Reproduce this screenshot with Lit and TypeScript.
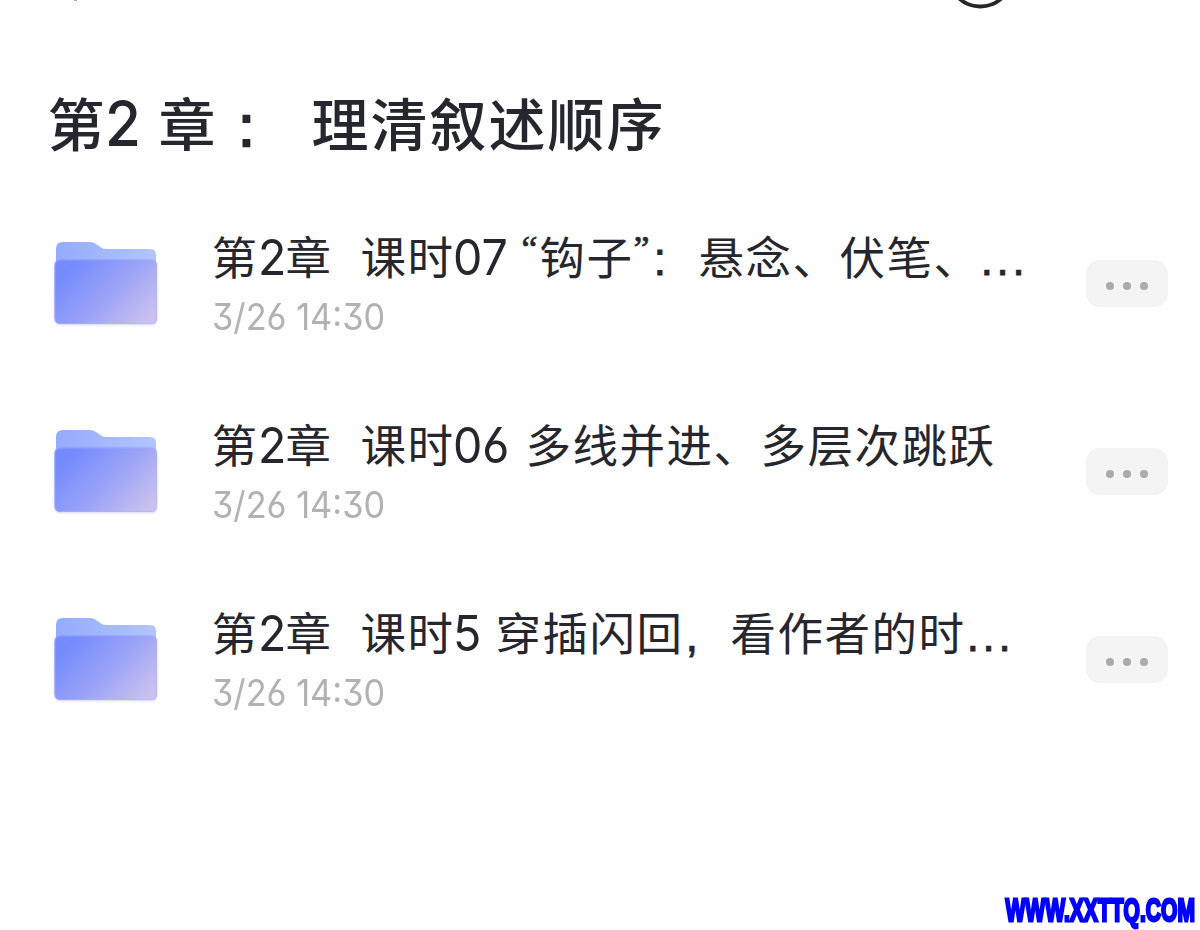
import { LitElement, html, css } from 'lit';
import { customElement, property } from 'lit/decorators.js';

// kind of glyphs in a run, its text and its advance width in px
type Run = [kind: 'han' | 'num' | 'quote' | 'mark' | 'dots', text: string, width: number];

interface Lesson {
  title: Run[];
  date: string;
}

const LESSONS: Lesson[] = [
  {
    title: [
      ['han', '第', 46], ['num', '2', 28], ['han', '章', 75],
      ['han', '课时', 92], ['num', '07', 69],
      ['quote', '“', 18], ['han', '钩子', 94], ['quote', '”', 20],
      ['mark', ':', 45], ['han', '悬念、伏笔、', 282], ['dots', '...', 50],
    ],
    date: '3/26 14:30',
  },
  {
    title: [
      ['han', '第', 46], ['num', '2', 28], ['han', '章', 75],
      ['han', '课时', 92], ['num', '06', 73], ['han', '多线并进、多层次跳跃', 470],
    ],
    date: '3/26 14:30',
  },
  {
    title: [
      ['han', '第', 46], ['num', '2', 28], ['han', '章', 75],
      ['han', '课时', 92], ['num', '5', 43], ['han', '穿插闪回', 190],
      ['mark', ',', 45], ['han', '看作者的时', 236], ['dots', '...', 50],
    ],
    date: '3/26 14:30',
  },
];

const HEADING: Run[] = [
  ['han', '第', 57], ['num', '2', 54], ['han', '章', 80],
  ['mark', ':', 73], ['han', '理清叙述顺序', 354],
];

@customElement('run-text')
class RunText extends LitElement {
  @property({ attribute: false }) runs: Run[] = [];

  render() {
    return this.runs.map(
      ([kind, text, width]) =>
        html`<span class="run" style="width:${width}px"><span class=${kind}>${text}</span></span>`
    );
  }

  static styles = css`
    :host {
      display: flex;
      align-items: baseline;
      white-space: pre;
    }

    .run {
      flex: none;
    }

    .han {
      letter-spacing: var(--han-spacing, 1.5px);
    }

    .num {
      display: inline-block;
      font-family: Inter, sans-serif;
      font-size: var(--num-size, 49.5px);
      line-height: 1;
      font-feature-settings: 'cv03', 'cv04', 'cv09';
      transform: scaleX(0.94);
      transform-origin: left;
    }

    .quote {
      font-family: 'Liberation Serif', serif;
      font-size: 36px;
      line-height: 1;
      vertical-align: 14px;
      -webkit-text-stroke: 0.7px currentColor;
    }

    .mark,
    .dots {
      font-family: 'Liberation Sans', sans-serif;
      -webkit-text-stroke: var(--mark-stroke, 0.8px) currentColor;
    }

    .dots {
      letter-spacing: 3.2px;
    }
  `;
}

@customElement('folder-icon')
class FolderIcon extends LitElement {
  render() {
    return html`
      <svg width="110" height="92" viewBox="0 0 110 92">
        <defs>
          <linearGradient id="back" x1="0" y1="0" x2="1" y2="0">
            <stop offset="0" stop-color="#94abfd" />
            <stop offset="1" stop-color="#b2c5ff" />
          </linearGradient>
          <linearGradient id="front" x1="0.08" y1="0.25" x2="1" y2="0.8">
            <stop offset="0" stop-color="#748bfd" />
            <stop offset="0.5" stop-color="#9ba3f7" />
            <stop offset="1" stop-color="#cac1ee" />
          </linearGradient>
          <linearGradient id="rim" x1="0" y1="0" x2="1" y2="0">
            <stop offset="0" stop-color="#a4b3ff" />
            <stop offset="0.35" stop-color="#e6ecff" />
            <stop offset="1" stop-color="#b9c0fc" />
          </linearGradient>
          <filter id="shadow" x="-10%" y="-10%" width="120%" height="130%">
            <feDropShadow dx="0" dy="1" stdDeviation="1.1" flood-color="#8d8fe0" flood-opacity="0.35" />
          </filter>
        </defs>
        <path
          d="M6 40V9Q6 2 13 2H39C47 2 50 9 56 9H100Q106 9 106 15V40Z"
          fill="url(#back)"
        />
        <rect x="4.5" y="19.5" width="102.5" height="64.5" rx="5.5" fill="url(#front)" filter="url(#shadow)" />
        <rect x="5" y="20" width="101.5" height="63.5" rx="5" fill="none" stroke="#a9b0ff" stroke-opacity="0.55" />
        <path d="M9 20H102" stroke="url(#rim)" stroke-width="1.6" />
      </svg>
    `;
  }

  static styles = css`
    :host,
    svg {
      display: block;
    }
  `;
}

@customElement('lesson-row')
class LessonRow extends LitElement {
  @property({ attribute: false }) lesson!: Lesson;

  render() {
    return html`
      <folder-icon></folder-icon>
      <div class="text">
        <run-text class="title" .runs=${this.lesson.title}></run-text>
        <div class="date">${this.lesson.date}</div>
      </div>
      <button class="more" aria-label="more"><i></i><i></i><i></i></button>
    `;
  }

  static styles = css`
    :host {
      display: grid;
      grid-template-columns: 110px 1fr 82px;
      column-gap: 52px;
      align-items: start;
      height: 188.2px;
      padding: 0 32px 0 50px;
      box-sizing: border-box;
    }

    .title {
      height: 60px;
      line-height: 60px;
      font-size: 45.5px;
      color: #26272e;
      margin: -15px 0 0 -0.5px;
    }

    .date {
      margin: 9px 0 0 0;
      font: 36.5px/46px Inter, sans-serif;
      font-feature-settings: 'cv03', 'cv04', 'cv09';
      color: #b2b2b2;
      white-space: pre;
      transform: scaleX(0.94);
      transform-origin: left;
    }

    .more {
      display: flex;
      align-items: center;
      justify-content: center;
      gap: 8.6px;
      width: 82px;
      height: 47px;
      margin: 19.5px 0 0;
      padding: 5px 0 0;
      border: 0;
      border-radius: 14px;
      background: #f4f4f4;
    }

    i {
      width: 8px;
      height: 8px;
      border-radius: 50%;
      background: #aaa;
    }
  `;
}

@customElement('app-root')
class AppRoot extends LitElement {
  render() {
    return html`
      <header class="bar">
        <svg width="1200" height="12" viewBox="0 0 1200 12">
          <path d="M74 0.5H77" stroke="#aaa" />
          <circle cx="980.3" cy="-25.5" r="32" fill="none" stroke="#26272b" stroke-width="3.8" />
        </svg>
      </header>
      <h1 class="heading"><run-text .runs=${HEADING}></run-text></h1>
      <main class="list">
        ${LESSONS.map((lesson) => html`<lesson-row .lesson=${lesson}></lesson-row>`)}
      </main>
      <footer class="site"><span class="url">WWW.XXTTQ.COM</span></footer>
    `;
  }

  static styles = css`
    :host {
      display: flex;
      flex-direction: column;
      width: 1200px;
      height: 930px;
      overflow: hidden;
      background: #fefefe;
      font-family: 'Noto Sans CJK SC', sans-serif;
    }

    .bar {
      height: 12px;
    }

    svg {
      display: block;
    }

    .heading {
      --num-size: 62px;
      --han-spacing: 2px;
      --mark-stroke: 2.4px;
      height: 80px;
      margin: 69px 0 0 47.5px;
      font-size: 57px;
      font-weight: 500;
      line-height: 80px;
      color: #26272e;
    }

    .list {
      margin-top: 79px;
      flex: 1;
    }

    .site {
      display: flex;
      justify-content: flex-end;
      padding: 0 5px 2px 0;
    }

    .url {
      font: bold 32px/36px 'Liberation Sans', sans-serif;
      color: #00f;
      -webkit-text-stroke: 2.8px #00f;
      transform: scaleX(0.658);
      transform-origin: right;
    }
  `;
}
